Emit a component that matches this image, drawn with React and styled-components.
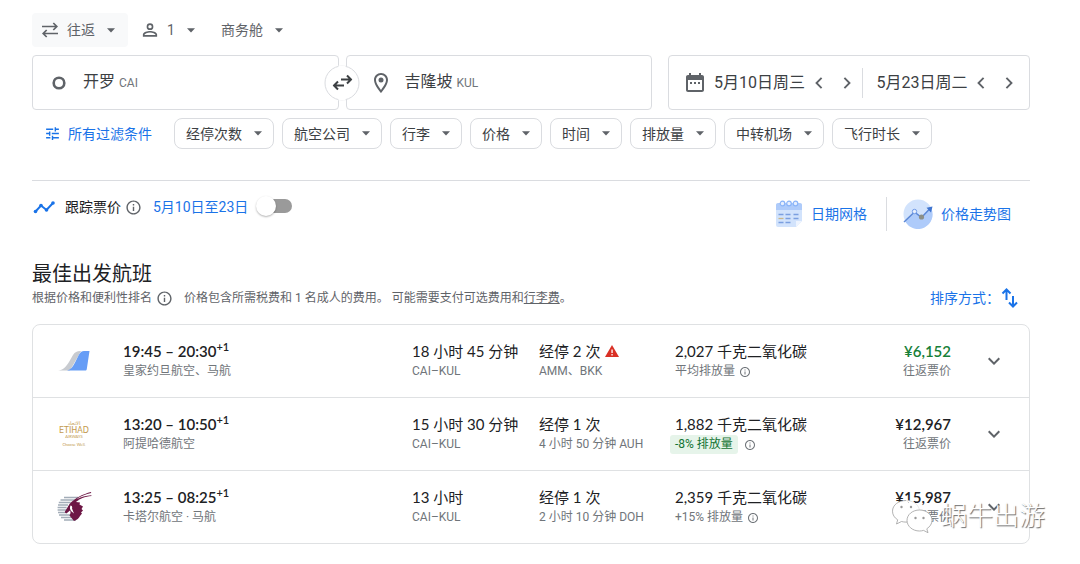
import React, { useState } from 'react'
import styled, { createGlobalStyle } from 'styled-components'

const GlobalStyle = createGlobalStyle`
    * {
        box-sizing: border-box;
    }

    body {
        margin: 0;
        background: #fff;
        color: #3c4043;
        font-family: Roboto, "Noto Sans CJK SC", sans-serif;
        font-size: 14px;
        line-height: 20px;
    }

    button, input, select {
        font: inherit;
        color: inherit;
        background: none;
        border: 0;
        padding: 0;
        margin: 0;
    }

    button {
        cursor: pointer;
    }

    svg {
        display: block;
        flex: none;
    }
`

const Page = styled.main`
    padding: 13px 50px 16px 32px;
`

const TripOptions = styled.div`
    display: flex;
    gap: 4px;
    margin-bottom: 8px;
`
const TripOption = styled.label`
    display: flex;
    align-items: center;
    height: 34px;
    padding: 0 12px 0 9px;
    border-radius: 4px;
    color: #5f6368;
    background: ${props => props.$active ? '#f8f9fa' : 'transparent'};
`
const TripSelect = styled.select`
    appearance: none;
    outline: none;
    margin-left: ${props => props.$icon ? '8px' : '0'};
    margin-right: 11px;
    cursor: pointer;
`

const SearchBar = styled.div`
    display: grid;
    grid-template-columns: 620fr 362fr;
    gap: 16px;
    margin-bottom: 8px;
`
const Places = styled.div`
    position: relative;
    display: grid;
    grid-template-columns: 1fr 1fr;
    gap: 7px;
`
const Box = styled.div`
    display: flex;
    align-items: center;
    height: 55px;
    border: 1px solid #dadce0;
    border-radius: 4px;
`
const PlaceBox = styled(Box).attrs({ as: 'label' })`
    gap: 12px;
    padding-left: ${props => props.$inset ? '22px' : '14px'};
    color: #5f6368;
`
const PlaceName = styled.span`
    display: flex;
    align-items: baseline;
    gap: 4px;
`
const PlaceInput = styled.input`
    field-sizing: content;
    outline: none;
    font-size: 16px;
    color: #3c4043;
`
const PlaceCode = styled.span`
    font-size: 12px;
    color: #70757a;
`
const SwapButton = styled.button`
    position: absolute;
    top: 50%;
    left: 50%;
    display: grid;
    place-items: center;
    width: 35px;
    height: 35px;
    transform: translate(-50%, -50%);
    border: 1px solid #dadce0;
    border-radius: 50%;
    background: #fff;
    color: #3c4043;

    /* opens the ring where it crosses the gap between the two boxes */
    &::before {
        content: '';
        position: absolute;
        top: -1px;
        bottom: -1px;
        left: 13px;
        width: 7px;
        background: #fff;
    }

    svg {
        position: relative;
    }
`

const DateBox = styled(Box)`
    padding: 0 5px 0 14px;
    color: #5f6368;
`
const DateField = styled.div`
    display: flex;
    align-items: center;
    flex: 1 1 auto;
    padding-left: ${props => props.$first ? '7px' : '14px'};

    & + & {
        height: 30px;
        border-left: 1px solid #dadce0;
    }
`
const DateInput = styled.input`
    width: 92px;
    margin-right: auto;
    outline: none;
    font-size: 16px;
    color: #3c4043;
`
const StepButton = styled.button`
    display: grid;
    place-items: center;
    width: 20px;
    height: 20px;
    margin-right: ${props => props.$prev ? '8px' : '5px'};
`

const Filters = styled.div`
    display: flex;
    align-items: center;
    gap: 8px;
    padding-bottom: 31px;
    border-bottom: 1px solid #dadce0;
`
const AllFilters = styled.button`
    display: flex;
    align-items: center;
    gap: 7px;
    padding: 0 14px 0 12px;
    color: #1a73e8;
`
const Chip = styled.button`
    display: flex;
    align-items: center;
    gap: 11px;
    height: 31px;
    padding: 0 10px 0 11px;
    border: 1px solid #dadce0;
    border-radius: 8px;
    white-space: nowrap;
`

const Toolbar = styled.div`
    display: flex;
    align-items: flex-start;
    justify-content: space-between;
    padding-top: 15px;
    margin-bottom: 28px;
`
const Track = styled.div`
    display: flex;
    align-items: center;
    height: 22px;
    color: #5f6368;
`
const TrackLabel = styled.label`
    margin: 0 4px 0 9px;
    color: #202124;
`
const TrackDates = styled.span`
    margin: 0 8px 0 11px;
    color: #1a73e8;
`
const Switch = styled.input`
    appearance: none;
    position: relative;
    width: 36px;
    height: 20px;
    margin-bottom: 3px;
    cursor: pointer;

    &::before {
        content: '';
        position: absolute;
        inset: 3px 0 3px 4px;
        border-radius: 7px;
        background: ${props => props.checked ? '#8ab4f8' : '#9a9a9a'};
    }

    &::after {
        content: '';
        position: absolute;
        top: 0;
        left: ${props => props.checked ? '16px' : '0'};
        width: 20px;
        height: 20px;
        border-radius: 50%;
        background: #fff;
        box-shadow: 0 1px 2px rgba(0, 0, 0, .3);
    }
`
const Tools = styled.div`
    display: flex;
    align-items: center;
    height: 36px;
`
const ToolLink = styled.a`
    display: flex;
    align-items: center;
    gap: 8px;
    height: 34px;
    padding: 0 19px 0 16px;
    color: #1a73e8;
    text-decoration: none;

    & + & {
        border-left: 1px solid #dadce0;
    }
`

const Title = styled.h2`
    margin: 0;
    font-size: 20px;
    font-weight: 400;
    line-height: 28px;
    color: #202124;
`
const SubHeader = styled.div`
    display: flex;
    align-items: center;
    height: 20px;
    margin-bottom: 16px;
    font-size: 12px;
    color: #5f6368;
`
const Ranking = styled.span`
    display: flex;
    align-items: center;
    gap: 4px;
    margin-right: 11px;
`
const BagLink = styled.a`
    color: inherit;
`
const SortButton = styled.button`
    display: flex;
    align-items: center;
    margin-left: auto;
    padding-right: 10px;
    font-size: 14px;
    color: #1a73e8;
`

const Results = styled.div`
    position: relative;
`
const FlightList = styled.ul`
    margin: 0;
    padding: 0;
    list-style: none;
    border: 1px solid #dfe1e3;
    border-radius: 8px;
`
const Flight = styled.li`
    display: grid;
    grid-template-columns: 90px 289fr 127fr 136fr 186fr 90px 78px;
    padding: 15px 0;

    & + & {
        border-top: 1px solid #dfe1e3;
    }
`
const Logo = styled.div`
    display: flex;
    align-items: center;
    padding-left: 24px;
`
const Cell = styled.div`
    text-align: ${props => props.$end ? 'right' : 'left'};
    white-space: nowrap;
`
const Main = styled.div`
    display: flex;
    align-items: center;
    justify-content: ${props => props.$end ? 'flex-end' : 'flex-start'};
    gap: 4px;
    height: 21px;
    font-family: Lato, "Noto Sans CJK SC", sans-serif;
    font-size: 15px;
    line-height: 20px;
    font-weight: ${props => props.$strong ? 600 : 400};
    color: ${props => props.$good ? '#188038' : '#202124'};
`
const Time = styled.span`
    sup {
        font-size: 11px;
        line-height: 0;
    }
`
const Sub = styled.div`
    display: flex;
    align-items: center;
    justify-content: ${props => props.$end ? 'flex-end' : 'flex-start'};
    gap: 4px;
    height: 21px;
    font-size: 12px;
    line-height: 21px;
    color: #70757a;
`
const Saving = styled.span`
    margin-left: -5px;
    margin-right: 2px;
    padding: 0 5px;
    border-radius: 3px;
    line-height: 19px;
    background: #e6f4ea;
    color: #137333;
`
const ExpandButton = styled.button`
    place-self: center;
    padding-left: 8px;
    color: #5f6368;
`

const Watermark = styled.div`
    position: absolute;
    right: -15px;
    bottom: 9px;
    display: flex;
    align-items: center;
    gap: 6px;
    font-size: 26px;
    font-weight: 300;
    line-height: 38px;
    color: #fff;
    text-shadow: 1px 1px 1px #666;
    pointer-events: none;
`

const Icon = ({ size = 24, children }) => (
    <svg width={size} height={size} viewBox="0 0 24 24" fill="currentColor" aria-hidden="true">
        {children}
    </svg>
)

const Caret = () => (
    <svg width="10" height="5" viewBox="0 0 10 5" fill="#5f6368" aria-hidden="true">
        <path d="M1 0.300h8L5 4.500z" />
    </svg>
)

const RoundTripIcon = () => (
    <svg width="18" height="18" viewBox="0 0 18 18" fill="none" stroke="currentColor" strokeWidth="1.700" aria-hidden="true">
        <path d="M1 5.500h14.500M12.300 2l3.500 3.500L12.300 9M17 12.500H2.500M5.700 9L2.200 12.500l3.500 3.500" />
    </svg>
)

const PersonIcon = () => (
    <Icon size={18}>
        <path d="M12 3a4.500 4.500 0 1 0 0 9 4.500 4.500 0 0 0 0-9zm0 2.200a2.300 2.300 0 1 1 0 4.600 2.300 2.300 0 0 1 0-4.600zM12 13.200c-3.200 0-9.500 1.500-9.500 4.800v3h19v-3c0-3.300-6.300-4.800-9.500-4.800zm7.200 5.600H4.800v-.7c.2-.9 3.700-2.700 7.200-2.700s7 1.800 7.200 2.700z" />
    </Icon>
)

const OriginIcon = () => (
    <Icon>
        <circle cx="12" cy="12" r="5.300" fill="none" stroke="currentColor" strokeWidth="2.600" />
    </Icon>
)

const PinIcon = () => (
    <Icon>
        <path d="M12 2C8.100 2 5 5.100 5 9c0 5.200 7 13 7 13s7-7.800 7-13c0-3.900-3.100-7-7-7zm0 2c2.800 0 5 2.200 5 5 0 2.900-2.900 7.200-5 9.900C9.900 16.200 7 11.900 7 9c0-2.800 2.200-5 5-5z" />
        <circle cx="12" cy="9" r="2.500" />
    </Icon>
)

const SwapIcon = () => (
    <svg width="20" height="16" viewBox="0 0 20 16" fill="none" stroke="currentColor" strokeWidth="2" aria-hidden="true">
        <path d="M8.500 5H18M14.500 1l4 4-4 4M11.500 11H2M5.500 7l-4 4 4 4" />
    </svg>
)

const CalendarIcon = () => (
    <Icon>
        <path d="M19 4h-1V2h-2v2H8V2H6v2H5c-1.100 0-2 .9-2 2v13c0 1.100.9 2 2 2h14c1.100 0 2-.9 2-2V6c0-1.100-.9-2-2-2zm0 15H5V9h14zM7 11h2v2H7zm4 0h2v2h-2zm4 0h2v2h-2z" />
    </Icon>
)

const ChevronLeft = () => (
    <Icon size={20}><path d="M15.410 7.410L14 6l-6 6 6 6 1.410-1.410L10.830 12z" transform="translate(12 12) scale(1.150) translate(-12 -12)" /></Icon>
)

const ChevronRight = () => (
    <Icon size={20}><path d="M8.590 16.590L10 18l6-6-6-6-1.410 1.410L13.170 12z" transform="translate(12 12) scale(1.150) translate(-12 -12)" /></Icon>
)

const ChevronDown = () => (
    <Icon><path d="M16.590 8.590L12 13.170 7.410 8.590 6 10l6 6 6-6z" /></Icon>
)

const TuneIcon = () => (
    <Icon size={17}>
        <path d="M3 17v2h6v-2H3zM3 5v2h10V5H3zm10 16v-2h8v-2h-8v-2h-2v6h2zM7 9v2H3v2h4v2h2V9H7zm14 4v-2H11v2h10zm-6-4h2V7h4V5h-4V3h-2v6z" />
    </Icon>
)

const InfoIcon = ({ size }) => (
    <Icon size={size}>
        <path d="M11 7h2v2h-2zm0 4h2v6h-2zm1-9C6.480 2 2 6.480 2 12s4.480 10 10 10 10-4.480 10-10S17.520 2 12 2zm0 18c-4.410 0-8-3.590-8-8s3.590-8 8-8 8 3.590 8 8-3.590 8-8 8z" />
    </Icon>
)

const TrendIcon = () => (
    <svg width="24" height="16" viewBox="0 0 24 16" fill="#1a73e8" aria-hidden="true">
        <path d="M3.500 12.500L9 6.500l5.500 4.500L21 4" fill="none" stroke="#1a73e8" strokeWidth="2" />
        <circle cx="3.500" cy="12.500" r="1.800" />
        <circle cx="9" cy="6.500" r="1.800" />
        <circle cx="14.500" cy="11" r="1.800" />
        <circle cx="21" cy="4" r="1.800" />
    </svg>
)

const DateGridIcon = () => (
    <svg width="28" height="28" viewBox="0 0 28 28" fill="none" aria-hidden="true">
        <path d="M1 4h26v17l-6 6H3a2 2 0 0 1-2-2z" fill="#d2e3fc" />
        <path d="M1 5a2 2 0 0 1 2-2h22a2 2 0 0 1 2 2v5H1z" fill="#aecbfa" />
        <path d="M27 21l-6 6v-6z" fill="#eef4fe" />
        <g stroke="#8ab4f8" strokeWidth="1.200" fill="#e8f0fe">
            <circle cx="7.500" cy="3.500" r="2.300" />
            <circle cx="14" cy="3.500" r="2.300" />
            <circle cx="20.500" cy="3.500" r="2.300" />
        </g>
        <path d="M10.500 14.500h5M18.500 14.500h5M10.500 18.500h5M18.500 18.500h5M3.500 22.500h5M10.500 22.500h5M3.500 14.500h5" stroke="#7b9fe0" strokeWidth="1.300" />
        <path d="M3.500 18.500h5" stroke="#c9b78b" strokeWidth="1.300" />
    </svg>
)

const PriceGraphIcon = () => (
    <svg width="30" height="30" viewBox="0 0 30 30" fill="none" aria-hidden="true">
        <circle cx="15" cy="15" r="14.500" fill="#d2e3fc" />
        <path d="M2 22L11.500 13l7 5L28 9a14.500 14.500 0 0 1-26 13z" fill="#aecbfa" />
        <path d="M1 23l10.500-10 7 5.500L27.500 9" stroke="#5c88d6" strokeWidth="1.500" />
        <path d="M23.500 8.700l6-1.200-1.500 6z" fill="#3f74cf" />
        <circle cx="11.500" cy="12.500" r="2.200" fill="#e8f0fe" stroke="#6f9ae8" />
        <circle cx="18.500" cy="18" r="2.600" fill="#8c8f87" />
    </svg>
)

const SortIcon = () => (
    <svg width="20" height="22" viewBox="0 0 20 22" fill="none" stroke="currentColor" strokeWidth="2" aria-hidden="true">
        <path d="M6.500 13V3M2.500 6.500l4-4 4 4M13 9v10M9 15.500l4 4 4-4" />
    </svg>
)

const WarningIcon = () => (
    <svg width="16" height="16" viewBox="0 0 16 16" aria-hidden="true">
        <path d="M8 2l7 12H1z" fill="#d93025" />
        <path d="M7.400 6.500h1.300v3.600H7.400zm0 4.500h1.300v1.400H7.400z" fill="#fff" />
    </svg>
)

const TailLogo = () => (
    <svg width="34" height="20" viewBox="0 0 34 20" aria-hidden="true">
        <path d="M1 19.500C6 19 9 16 12 11l4-7c2-3 4-4 7-4h1L13 19.500z" fill="#c8cbd0" />
        <path d="M10 19.500c4-1 6-4 8-8l4-8c1.500-2.500 3-3.500 5-3.500h5.500l-2.700 18c-.2 1-.6 1.500-1.600 1.500z" fill="#669df6" />
    </svg>
)

const EtihadLogo = () => (
    <svg width="36" height="30" viewBox="0 0 36 30" fill="#c39a4e" textAnchor="middle" aria-hidden="true">
        <text x="17" y="6" fontFamily="DejaVu Sans" fontSize="5">الاتحاد</text>
        <text x="17" y="14" fontFamily="DejaVu Sans" fontSize="8">ETIHAD</text>
        <text x="17" y="19" fontFamily="Lato" fontSize="4">AIRWAYS</text>
        <text x="17" y="27" fontFamily="Lato" fontSize="4">Choose Well.</text>
    </svg>
)

const QatarLogo = () => (
    <svg width="36" height="32" viewBox="0 0 36 32" fill="none" aria-hidden="true">
        <path d="M7 6.500h14M3.500 9h18M1.800 11.500h12M1 14h10M.6 16.500h9M.6 19h9M1 21.500h9M2 24h12M4 26.500h14M7 29h12" stroke="#a3adb8" strokeWidth="1.500" />
        <path d="M34 1C26 3 18 7 12.500 13L8 20.500c-.5 1.500 1 2 2 1.500l3-2.500c1 2 .5 3.500-.5 5L17 30c3-1 5-3 6-5l2-2.500-1-1 2-2-1.500-1.500 1.500-2.500-3.500-2 .5-2-4-.5C22 8 28 5.500 34.500 5l-.2-.8C29 4.500 24 6 19 8.500 23 5.500 29 3 34.200 2z" fill="#6d1745" />
        <path d="M13.500 14.500c1.500 0 2 1.500 1.500 3l2 5-3-2.500c-1-1.500-1.500-3.500-.5-5.500z" fill="#fff" />
    </svg>
)

const WeChatIcon = () => (
    <svg width="44" height="38" viewBox="0 0 44 38" fill="#fff" stroke="#a0a0a0" strokeWidth=".8" aria-hidden="true">
        <path d="M15 3.500C7.500 3.500 1.500 8 1.500 14.200c0 3.600 2 6.700 5.200 8.600L5.500 27l5-2.500c1.500.4 3 .6 4.500.6 7.500 0 13.500-4.900 13.500-10.900" />
        <path d="M15 3.500c7.500 0 13.500 4.700 13.500 10.700" stroke="#e4e4e4" />
        <path d="M28.500 13c-7 0-12.500 4.600-12.500 10.400S21.500 34 28.500 34c1.400 0 2.800-.2 4-.6l4.500 2.300-1.200-3.900c3.100-2 5.200-5 5.200-8.400C41 17.600 35.500 13 28.500 13z" />
        <g fill="#999" stroke="none">
            <circle cx="10.500" cy="10" r="1.200" />
            <circle cx="20" cy="10" r="1.200" />
            <circle cx="24.500" cy="21" r="1.200" />
            <circle cx="32.500" cy="21" r="1.200" />
        </g>
    </svg>
)

const filters = ['经停次数', '航空公司', '行李', '价格', '时间', '排放量', '中转机场', '飞行时长']

const flights = [
    {
        logo: <TailLogo />,
        time: '19:45 – 20:30',
        airline: '皇家约旦航空、马航',
        duration: '18 小时 45 分钟',
        stops: '经停 2 次',
        warning: true,
        via: 'AMM、BKK',
        co2: '2,027 千克二氧化碳',
        emission: '平均排放量',
        price: '¥6,152',
        good: true,
    },
    {
        logo: <EtihadLogo />,
        time: '13:20 – 10:50',
        airline: '阿提哈德航空',
        duration: '15 小时 30 分钟',
        stops: '经停 1 次',
        via: '4 小时 50 分钟 AUH',
        co2: '1,882 千克二氧化碳',
        emission: '-8% 排放量',
        saving: true,
        price: '¥12,967',
    },
    {
        logo: <QatarLogo />,
        time: '13:25 – 08:25',
        airline: '卡塔尔航空 · 马航',
        duration: '13 小时',
        stops: '经停 1 次',
        via: '2 小时 10 分钟 DOH',
        co2: '2,359 千克二氧化碳',
        emission: '+15% 排放量',
        price: '¥15,987',
    },
]

const DateStepper = ({ first, label, defaultValue }) => (
    <DateField $first={first}>
        <DateInput aria-label={label} defaultValue={defaultValue} />
        <StepButton $prev aria-label="前一天"><ChevronLeft /></StepButton>
        <StepButton aria-label="后一天"><ChevronRight /></StepButton>
    </DateField>
)

const FlightRow = ({ flight }) => (
    <Flight>
        <Logo>{flight.logo}</Logo>
        <Cell>
            <Main $strong><Time>{flight.time}<sup>+1</sup></Time></Main>
            <Sub>{flight.airline}</Sub>
        </Cell>
        <Cell>
            <Main>{flight.duration}</Main>
            <Sub>CAI–KUL</Sub>
        </Cell>
        <Cell>
            <Main>{flight.stops}{flight.warning && <WarningIcon />}</Main>
            <Sub>{flight.via}</Sub>
        </Cell>
        <Cell>
            <Main>{flight.co2}</Main>
            <Sub>
                {flight.saving ? <Saving>{flight.emission}</Saving> : flight.emission}
                <InfoIcon size={12} />
            </Sub>
        </Cell>
        <Cell $end>
            <Main $end $strong $good={flight.good}>{flight.price}</Main>
            <Sub $end>往返票价</Sub>
        </Cell>
        <ExpandButton aria-label="航班详情"><ChevronDown /></ExpandButton>
    </Flight>
)

const App = () => {
    const [tracking, setTracking] = useState(false)
    const [places, setPlaces] = useState([
        { name: '开罗', code: 'CAI' },
        { name: '吉隆坡', code: 'KUL' },
    ])

    const handlerPlace = (index, name) => {
        setPlaces(prevState => prevState.map((place, i) => i === index ? { ...place, name } : place))
    }

    return (
        <Page>
            <GlobalStyle />
            <TripOptions>
                <TripOption $active>
                    <RoundTripIcon />
                    <TripSelect $icon aria-label="行程类型"><option>往返</option></TripSelect>
                    <Caret />
                </TripOption>
                <TripOption>
                    <PersonIcon />
                    <TripSelect $icon aria-label="乘客人数"><option>1</option></TripSelect>
                    <Caret />
                </TripOption>
                <TripOption>
                    <TripSelect aria-label="舱位等级"><option>商务舱</option></TripSelect>
                    <Caret />
                </TripOption>
            </TripOptions>

            <SearchBar>
                <Places>
                    {places.map((place, i) => (
                        <PlaceBox key={i} $inset={i === 1}>
                            {i === 0 ? <OriginIcon /> : <PinIcon />}
                            <PlaceName>
                                <PlaceInput
                                    aria-label={i === 0 ? '出发地' : '目的地'}
                                    value={place.name}
                                    onChange={e => handlerPlace(i, e.target.value)}
                                />
                                <PlaceCode>{place.code}</PlaceCode>
                            </PlaceName>
                        </PlaceBox>
                    ))}
                    <SwapButton aria-label="交换出发地和目的地" onClick={() => setPlaces([places[1], places[0]])}>
                        <SwapIcon />
                    </SwapButton>
                </Places>
                <DateBox>
                    <CalendarIcon />
                    <DateStepper first label="出发日期" defaultValue="5月10日周三" />
                    <DateStepper label="返程日期" defaultValue="5月23日周二" />
                </DateBox>
            </SearchBar>

            <Filters>
                <AllFilters><TuneIcon />所有过滤条件</AllFilters>
                {filters.map(name => (
                    <Chip key={name} aria-haspopup="dialog">{name}<Caret /></Chip>
                ))}
            </Filters>

            <Toolbar>
                <Track>
                    <TrendIcon />
                    <TrackLabel htmlFor="track">跟踪票价</TrackLabel>
                    <InfoIcon size={17} />
                    <TrackDates>5月10日至23日</TrackDates>
                    <Switch
                        id="track"
                        type="checkbox"
                        role="switch"
                        checked={tracking}
                        onChange={() => setTracking(!tracking)}
                    />
                </Track>
                <Tools>
                    <ToolLink href="#dates"><DateGridIcon />日期网格</ToolLink>
                    <ToolLink href="#graph"><PriceGraphIcon />价格走势图</ToolLink>
                </Tools>
            </Toolbar>

            <Title>最佳出发航班</Title>
            <SubHeader>
                <Ranking>根据价格和便利性排名<InfoIcon size={17} /></Ranking>
                <span>价格包含所需税费和 1 名成人的费用。 可能需要支付可选费用和<BagLink href="#bags">行李费</BagLink>。</span>
                <SortButton>排序方式：<SortIcon /></SortButton>
            </SubHeader>

            <Results>
                <FlightList>
                    {flights.map(flight => <FlightRow key={flight.time} flight={flight} />)}
                </FlightList>
                <Watermark><WeChatIcon />蜗牛出游</Watermark>
            </Results>
        </Page>
    )
}

export default App
